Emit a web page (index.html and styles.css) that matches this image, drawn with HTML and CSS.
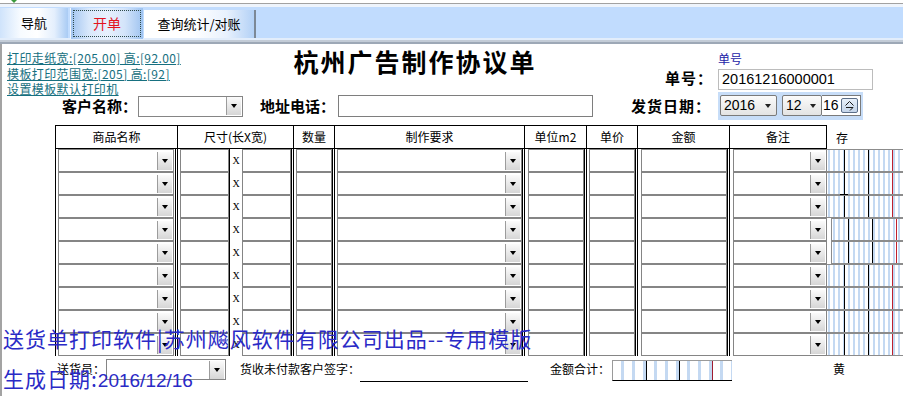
FILE: index.html
```html
<!DOCTYPE html>
<html lang="zh-CN">
<head>
<meta charset="utf-8">
<title>开单</title>
<link rel="stylesheet" href="styles.css">
</head>
<body>
<div class="app">
  <div class="topstrip"><span class="marker"></span></div>
  <div class="tabbar">
    <div class="tab tab-nav">导航</div>
    <div class="tab tab-active"><span class="focus">开单</span></div>
    <div class="tab tab-query">查询统计/对账</div>
  </div>
  <div class="panel">
    <div class="head-top">
      <div class="links">
        <a class="link">打印走纸宽:[205.00] 高:[92.00]</a>
        <a class="link">模板打印范围宽:[205] 高:[92]</a>
        <a class="link">设置模板默认打印机</a>
      </div>
      <h1 class="title">杭州广告制作协议单</h1>
      <div class="orderno">
        <span class="small-label">单号</span>
        <span class="lbl lbl-no">单号：</span>
        <span class="textbox no">20161216000001</span>
      </div>
    </div>
    <div class="head-row">
      <span class="lbl lbl-cust">客户名称：</span>
      <span class="sel cust"><span class="dd"></span></span>
      <span class="lbl lbl-addr">地址电话：</span>
      <span class="textbox addr"></span>
      <span class="lbl lbl-date">发货日期：</span>
      <span class="datepick">
        <span class="combo combo-y">2016<i class="tri"></i></span>
        <span class="combo combo-m">12<i class="tri"></i></span>
        <span class="daybox"><span class="dnum">16</span><span class="spin"><svg width="13" height="12" viewBox="0 0 13 12"><path d="M2.5 5.5 L6.5 1.5 L10.5 5.5" fill="none" stroke="#1a1a1a" stroke-width="1"/><path d="M3 7.5 H10 L7 10.5" fill="none" stroke="#1a1a1a" stroke-width="1"/></svg></span></span>
      </span>
    </div>

    <div class="sheet">
      <div class="hc hc-first">商品名称</div>
      <div class="hc">尺寸(长X宽)</div>
      <div class="hc">数量</div>
      <div class="hc">制作要求</div>
      <div class="hc">单位m2</div>
      <div class="hc">单价</div>
      <div class="hc">金额</div>
      <div class="hc">备注</div>
      <div class="hc-side">存</div>

      <!-- row 1 -->
      <div class="dc c1"><span class="sel"><span class="dd"></span></span></div>
      <div class="dc c2"><span class="tb"></span><span class="xbox">X</span><span class="tb"></span></div>
      <div class="dc c3"><span class="tb"></span></div>
      <div class="dc c4"><span class="sel"><span class="dd"></span></span></div>
      <div class="dc c5"><span class="tb"></span></div>
      <div class="dc c6"><span class="tb"></span></div>
      <div class="dc c7"><span class="tb"></span></div>
      <div class="dc c8"><span class="sel"><span class="dd"></span></span></div>
      <div class="mc"></div>
      <!-- row 2 -->
      <div class="dc c1"><span class="sel"><span class="dd"></span></span></div>
      <div class="dc c2"><span class="tb"></span><span class="xbox">X</span><span class="tb"></span></div>
      <div class="dc c3"><span class="tb"></span></div>
      <div class="dc c4"><span class="sel"><span class="dd"></span></span></div>
      <div class="dc c5"><span class="tb"></span></div>
      <div class="dc c6"><span class="tb"></span></div>
      <div class="dc c7"><span class="tb"></span></div>
      <div class="dc c8"><span class="sel"><span class="dd"></span></span></div>
      <div class="mc"></div>
      <!-- row 3 -->
      <div class="dc c1"><span class="sel"><span class="dd"></span></span></div>
      <div class="dc c2"><span class="tb"></span><span class="xbox">X</span><span class="tb"></span></div>
      <div class="dc c3"><span class="tb"></span></div>
      <div class="dc c4"><span class="sel"><span class="dd"></span></span></div>
      <div class="dc c5"><span class="tb"></span></div>
      <div class="dc c6"><span class="tb"></span></div>
      <div class="dc c7"><span class="tb"></span></div>
      <div class="dc c8"><span class="sel"><span class="dd"></span></span></div>
      <div class="mc"><span class="tick tick-a"></span></div>
      <!-- row 4 -->
      <div class="dc c1"><span class="sel"><span class="dd"></span></span></div>
      <div class="dc c2"><span class="tb"></span><span class="xbox">X</span><span class="tb"></span></div>
      <div class="dc c3"><span class="tb"></span></div>
      <div class="dc c4"><span class="sel"><span class="dd"></span></span></div>
      <div class="dc c5"><span class="tb"></span></div>
      <div class="dc c6"><span class="tb"></span></div>
      <div class="dc c7"><span class="tb"></span></div>
      <div class="dc c8"><span class="sel"><span class="dd"></span></span></div>
      <div class="mc mc-shift"></div>
      <!-- row 5 -->
      <div class="dc c1"><span class="sel"><span class="dd"></span></span></div>
      <div class="dc c2"><span class="tb"></span><span class="xbox">X</span><span class="tb"></span></div>
      <div class="dc c3"><span class="tb"></span></div>
      <div class="dc c4"><span class="sel"><span class="dd"></span></span></div>
      <div class="dc c5"><span class="tb"></span></div>
      <div class="dc c6"><span class="tb"></span></div>
      <div class="dc c7"><span class="tb"></span></div>
      <div class="dc c8"><span class="sel"><span class="dd"></span></span></div>
      <div class="mc mc-shift"></div>
      <!-- row 6 -->
      <div class="dc c1"><span class="sel"><span class="dd"></span></span></div>
      <div class="dc c2"><span class="tb"></span><span class="xbox">X</span><span class="tb"></span></div>
      <div class="dc c3"><span class="tb"></span></div>
      <div class="dc c4"><span class="sel"><span class="dd"></span></span></div>
      <div class="dc c5"><span class="tb"></span></div>
      <div class="dc c6"><span class="tb"></span></div>
      <div class="dc c7"><span class="tb"></span></div>
      <div class="dc c8"><span class="sel"><span class="dd"></span></span></div>
      <div class="mc"></div>
      <!-- row 7 -->
      <div class="dc c1"><span class="sel"><span class="dd"></span></span></div>
      <div class="dc c2"><span class="tb"></span><span class="xbox">X</span><span class="tb"></span></div>
      <div class="dc c3"><span class="tb"></span></div>
      <div class="dc c4"><span class="sel"><span class="dd"></span></span></div>
      <div class="dc c5"><span class="tb"></span></div>
      <div class="dc c6"><span class="tb"></span></div>
      <div class="dc c7"><span class="tb"></span></div>
      <div class="dc c8"><span class="sel"><span class="dd"></span></span></div>
      <div class="mc"></div>
      <!-- row 8 -->
      <div class="dc c1"><span class="sel"><span class="dd"></span></span></div>
      <div class="dc c2"><span class="tb"></span><span class="xbox">X</span><span class="tb"></span></div>
      <div class="dc c3"><span class="tb"></span></div>
      <div class="dc c4"><span class="sel"><span class="dd"></span></span></div>
      <div class="dc c5"><span class="tb"></span></div>
      <div class="dc c6"><span class="tb"></span></div>
      <div class="dc c7"><span class="tb"></span></div>
      <div class="dc c8"><span class="sel"><span class="dd"></span></span></div>
      <div class="mc"></div>
      <!-- row 9 -->
      <div class="dc c1"><span class="sel"><span class="dd"></span></span></div>
      <div class="dc c2"><span class="tb"></span><span class="xbox">X</span><span class="tb"></span></div>
      <div class="dc c3"><span class="tb"></span></div>
      <div class="dc c4"><span class="sel"><span class="dd"></span></span></div>
      <div class="dc c5"><span class="tb"></span></div>
      <div class="dc c6"><span class="tb"></span></div>
      <div class="dc c7"><span class="tb"></span></div>
      <div class="dc c8"><span class="sel"><span class="dd"></span></span></div>
      <div class="mc"></div>
    </div>

    <div class="footer">
      <span class="flbl f-sender">送货员：</span>
      <span class="sel sender"><span class="dd"></span></span>
      <span class="flbl f-sign">货收未付款客户签字：</span>
      <span class="signline"></span>
      <span class="flbl f-total">金额合计：</span>
      <span class="totalbox"></span>
      <span class="flbl f-yellow">黄</span>
    </div>

    <div class="watermark">
      <p>送货单打印软件|苏州飚风软件有限公司出品--专用模版</p>
      <p>生成日期:<span class="wm-date">2016/12/16</span></p>
    </div>
  </div>
</div>
</body>
</html>
```

FILE: styles.css
```css
* { box-sizing: border-box; margin: 0; padding: 0; }
html, body { width: 903px; height: 396px; overflow: hidden; background: #fff; }
body {
  font-family: "Noto Sans CJK SC", "Liberation Sans", sans-serif;
  font-size: 12px;
  line-height: 1.2;
  color: #000;
}
.app { width: 903px; height: 396px; overflow: hidden; }

/* top strip + tabs */
.topstrip { height: 3px; background: #fff; position: relative; }
.marker {
  position: absolute; left: 11px; top: 0;
  border-left: 3px solid transparent; border-right: 3px solid transparent;
  border-top: 3px solid #3c9a3c;
}
.tabbar {
  height: 41px;
  border-top: 1px solid #a2a2a2;
  background: linear-gradient(#eef4fc 0 3px, #c1dcfe 3px 34px, #e2edfb 34px 36px, #c3ccd7 36px 38px, #9da8b6 38px 40px);
  display: flex;
  align-items: flex-start;
  padding-top: 4px;
}
.tab {
  height: 30px;
  display: flex; align-items: center; justify-content: center;
  font-size: 13px;
}
.tab-nav {
  width: 68px;
  background: linear-gradient(90deg, #cfe3fb 0%, #f7fbff 30%, #ffffff 55%, #e4effd 80%, #a9cbf4 100%);
}
.tab-active {
  width: 73px; margin-left: 2px; height: 31px;
  background: linear-gradient(90deg, #a3c6f1 0%, #d9e8fb 25%, #e8f1fd 50%, #d3e4fa 75%, #9ec3f0 100%);
  border-left: 1px solid #f2f7fd;
  padding: 2px;
}
.focus {
  width: 100%; height: 100%;
  border: 1px dotted #2e4a4a;
  display: flex; align-items: center; justify-content: center;
  color: #e3141e; font-size: 14px;
}
.tab-query {
  width: 112px; margin-left: 1px; margin-top: 2px; height: 28px;
  background: linear-gradient(90deg, #ffffff 0%, #ffffff 45%, #e8f1fd 75%, #b3d1f6 100%);
  border-right: 2px solid #7c8896;
}

/* panel */
.panel {
  position: relative;
  height: 352px;
  border-left: 2px solid #a3a3a3;
}
.head-top { height: 48px; display: flex; align-items: flex-start; }
.links {
  width: 286px; padding: 6px 0 0 5px;
  display: flex; flex-direction: column;
}
.link {
  color: #177080; text-decoration: underline;
  font-size: 12px; line-height: 15.5px; letter-spacing: 0.4px;
  white-space: nowrap;
}
.title {
  width: 252px; margin-top: 3px;
  text-align: center;
  font-size: 25px; font-weight: 700; line-height: 29px;
  letter-spacing: 2px; padding-left: 2px;
  color: #000;
}
.orderno {
  margin-left: 125px;
  display: grid;
  grid-template-columns: 53px 155px;
  grid-template-rows: 22px 21px;
  align-items: center;
}
.small-label {
  grid-column: 2; grid-row: 1;
  color: #1c1ca6; font-size: 12px; line-height: 14px; margin-top: 8px;
}
.lbl { font-weight: 700; font-size: 15px; line-height: 18px; white-space: nowrap; }
.lbl-no { grid-column: 1; grid-row: 2; letter-spacing: 1px; margin-top: 3px; }
.textbox {
  display: block;
  border: 1px solid #a9a9a9; background: #fff;
  font-size: 14px; line-height: 19px; padding-left: 3px;
}
.no { grid-column: 2; grid-row: 2; height: 21px; margin-top: 5px; border-color: #bcbcbc; font-family: "Liberation Sans", sans-serif; font-size: 14.5px; }

.head-row { height: 28px; display: flex; align-items: center; }
.lbl-cust { margin-left: 60px; width: 76px; }
.sel {
  display: flex; justify-content: flex-end; align-items: center;
  border: 1px solid #858585; background: #fff; padding-right: 1px;
}
.cust { width: 105px; height: 21px; }
.lbl-addr { margin-left: 17px; width: 78px; }
.addr { width: 255px; height: 22px; border-color: #7e7e7e; }
.lbl-date { margin-left: 38px; width: 87px; letter-spacing: 1px; }
.datepick {
  width: 145px; height: 28px;
  background: #c7ddf8;
  display: flex; align-items: center;
  padding-left: 2px; margin-top: -1px;
}
.combo {
  height: 21px;
  border: 1px solid #7a7a7a; border-radius: 2px;
  background: linear-gradient(#fbfbfb, #e3e3e3);
  font-family: "Liberation Sans", sans-serif; font-size: 14px;
  display: flex; align-items: center; padding-left: 3px;
  position: relative;
}
.combo-y { width: 57px; }
.combo-m { width: 40px; margin-left: 5px; }
.tri {
  position: absolute; right: 5px; top: 8px;
  border-left: 3px solid transparent; border-right: 3px solid transparent;
  border-top: 4px solid #222;
}
.daybox {
  width: 39px; height: 21px;
  border: 1px solid #7a7a7a; border-left: 0;
  background: #fff;
  display: flex; align-items: center;
  font-family: "Liberation Sans", sans-serif; font-size: 14px;
}
.dnum { width: 19px; overflow: hidden; white-space: nowrap; padding-left: 1px; }
.spin {
  width: 17px; height: 15px;
  border: 1px solid #5b6e88; border-radius: 2px;
  background: linear-gradient(#e8f0fa, #c5d5ea);
  display: flex; align-items: center; justify-content: center;
}

/* table */
.sheet {
  margin: 5px 0 0 53px;
  display: grid;
  grid-template-columns: 123px 116px 41px 190px 62px 51px 92px 97px 76px;
  grid-template-rows: 24px repeat(9, 23px);
}
.hc {
  border-top: 1px solid #000; border-bottom: 1px solid #000; border-right: 1px solid #000;
  text-align: center; font-size: 12px; line-height: 21px;
}
.hc-first { border-left: 1px solid #000; }
.hc-side { font-size: 12px; padding: 6px 0 0 9px; }

.dc {
  display: flex;
  border-right: 3px double #000;
  padding-left: 2px;
}
.c1 { border-left: 1px solid #000; padding-left: 2px; padding-right: 1px; }
.c2 { padding-left: 2px; }
.c5, .c7, .c8 { padding-left: 3px; }
.c8 { border-right: 0; }
.dc .sel { flex: 1; }
.tb { flex: 1; border: 1px solid #858585; background: #fff; }
.xbox {
  width: 13px; border-left: 1px solid #000;
  display: flex; align-items: center; justify-content: center;
  font-family: "Liberation Serif", serif; font-size: 10px;
}
.dd {
  width: 15px; height: 18px;
  border-left: 1px solid #9c9c9c;
  background: linear-gradient(#fbfbfb, #d6d6d6);
  display: flex; align-items: center; justify-content: center;
}
.dd::after {
  content: "";
  border-left: 3.5px solid transparent; border-right: 3.5px solid transparent;
  border-top: 4px solid #000;
}

.mc {
  position: relative;
  border-top: 1px solid #8c8c8c; border-bottom: 1px solid #8c8c8c;
  background:
    linear-gradient(90deg, transparent 17px, #000 17px 18px, transparent 18px 41px, #000 41px 42px, transparent 42px 65px, #c0202c 65px 66px, transparent 66px),
    repeating-linear-gradient(90deg, #fff 0 1px, #c4d9f2 1px 3px, #fff 3px 5px);
}
.mc-shift {
  margin-left: 4px;
  border-left: 1px solid #8c8c8c;
  background:
    linear-gradient(90deg, transparent 16px, #000 16px 17px, transparent 17px 40px, #000 40px 41px, transparent 41px 64px, #c0202c 64px 65px, transparent 65px),
    repeating-linear-gradient(90deg, #fff 0 1px, #c4d9f2 1px 3px, #fff 3px 5px);
}
.tick { position: absolute; background: #000; }
.tick-a { left: 13px; top: -2px; width: 8px; height: 1px; }

/* footer */
.footer { height: 25px; display: flex; align-items: center; margin-top: 1px; }
.flbl { font-size: 12px; white-space: nowrap; }
.f-sender { margin-left: 55px; width: 49px; }
.sender { width: 120px; height: 21px; }
.f-sign { margin-left: 14px; }
.signline { width: 168px; height: 1px; background: #000; align-self: flex-end; margin-bottom: 0; }
.f-total { margin-left: 22px; width: 62px; }
.totalbox {
  width: 120px; height: 21px; margin-top: 2px;
  border-top: 1px solid #9a9a9a; border-left: 1px solid #9a9a9a; border-bottom: 1px solid #000;
  background:
    linear-gradient(90deg, transparent 33px, #000 33px 34px, transparent 34px 66px, #000 66px 67px, transparent 67px 99px, #a01c30 99px 100px, transparent 100px),
    repeating-linear-gradient(90deg, #fff 0 8px, #c4d9f2 8px 11px);
}
.f-yellow { margin-left: 101px; }

/* watermark overlay */
.watermark {
  position: absolute; left: 1px; top: 274px;
  color: #2a2ac6;
  font-size: 21px; line-height: 40px;
  white-space: nowrap;
  pointer-events: none;
}
.watermark p { letter-spacing: 1px; }
.wm-date { font-family: "Liberation Sans", sans-serif; font-size: 19px; letter-spacing: 0; }
```
